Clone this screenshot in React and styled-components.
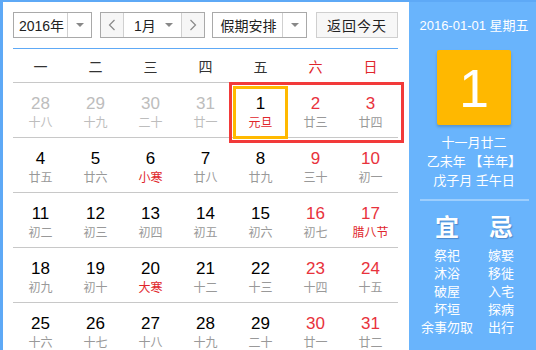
import React from 'react';
import styled, { createGlobalStyle } from 'styled-components';

const GlobalStyle = createGlobalStyle`
  html, body { margin: 0; padding: 0; background: #fff; }
  body { font-family: "Liberation Sans", "Noto Sans CJK SC", sans-serif; }
`;

const FONT = '"Liberation Sans", "Noto Sans CJK SC", sans-serif';
const RED = '#e8323c';

const Frame = styled.div`
  width: 536px;
  height: 350px;
  box-sizing: border-box;
  border-top: 2px solid #5ea9f6;
  border-left: 3px solid #5ea9f6;
  display: flex;
  overflow: hidden;
  font-family: ${FONT};
`;

const Main = styled.div`
  width: 406px;
  box-sizing: border-box;
  padding: 10px 0 0 10px;
  flex-shrink: 0;
`;

const Toolbar = styled.div`
  display: flex;
  height: 26px;
  width: 385px;
`;

const Select = styled.div`
  display: flex;
  height: 26px;
  width: ${(p) => p.$w}px;
  margin-right: ${(p) => p.$mr || 0}px;
  box-sizing: border-box;
  border: 1px solid #a9a9a9;
  background: #fff;
  font-size: 14px;
  color: #222;
`;

const SelectLabel = styled.div`
  flex: 1;
  display: flex;
  align-items: center;
  justify-content: center;
  padding-left: ${(p) => p.$pl || 0}px;
`;

const ArrowBox = styled.div`
  width: 23px;
  display: flex;
  align-items: center;
  justify-content: center;
  border-left: 1px solid #d0d0d0;
  &::after {
    content: '';
    border-left: 4px solid transparent;
    border-right: 4px solid transparent;
    border-top: 4px solid #888;
  }
`;

const MonthGroup = styled.div`
  display: flex;
  height: 26px;
  width: 105px;
  margin-right: 7px;
  box-sizing: border-box;
  border: 1px solid #a9a9a9;
  font-size: 14px;
  color: #222;
`;

const NavButton = styled.div`
  width: 22px;
  display: flex;
  align-items: center;
  justify-content: center;
  background: #f6f6f6;
  border-left: ${(p) => (p.$right ? '1px solid #d0d0d0' : 'none')};
  border-right: ${(p) => (p.$right ? 'none' : '1px solid #d0d0d0')};
`;

const MonthSelect = styled.div`
  flex: 1;
  display: flex;
  align-items: center;
  padding-left: 10px;
  background: #fff;
  justify-content: space-between;
  padding-right: 8px;
  &::after {
    content: '';
    border-left: 4px solid transparent;
    border-right: 4px solid transparent;
    border-top: 4px solid #888;
  }
`;

const TodayButton = styled.div`
  width: 82px;
  height: 26px;
  box-sizing: border-box;
  border: 1px solid #cfcfcf;
  background: #f7f7f7;
  font-size: 14px;
  color: #222;
  display: flex;
  align-items: center;
  justify-content: center;
  letter-spacing: 1px;
`;

const Calendar = styled.div`
  position: relative;
  width: 385px;
  margin-top: 10px;
  border-top: 1px solid #5ea9f6;
`;

const WeekHeader = styled.div`
  display: grid;
  grid-template-columns: repeat(7, 55px);
  height: 33px;
  border-bottom: 1px solid #c8c8c8;
`;

const WeekDay = styled.div`
  display: flex;
  align-items: center;
  justify-content: center;
  font-size: 14px;
  color: ${(p) => (p.$weekend ? '#e0262b' : '#333')};
`;

const Row = styled.div`
  display: grid;
  grid-template-columns: repeat(7, 55px);
  height: 54px;
  border-bottom: 1px solid #c8c8c8;
`;

const Cell = styled.div`
  display: flex;
  flex-direction: column;
  align-items: center;
  padding-top: 11px;
`;

const DayNum = styled.div`
  font-size: 17px;
  line-height: 20px;
  color: ${(p) => (p.$other ? '#bdbdbd' : p.$weekend ? RED : '#000')};
`;

const Lunar = styled.div`
  font-size: 12px;
  line-height: 18px;
  color: ${(p) => (p.$other ? '#bdbdbd' : p.$festival ? '#e0262b' : '#999')};
`;

const HolidayBox = styled.div`
  position: absolute;
  left: 216px;
  top: 33px;
  width: 175px;
  height: 61px;
  box-sizing: border-box;
  border: 3px solid #f23a3a;
  pointer-events: none;
`;

const TodayBox = styled.div`
  position: absolute;
  left: 220px;
  top: 37px;
  width: 55px;
  height: 53px;
  box-sizing: border-box;
  border: 3px solid #ffb900;
  pointer-events: none;
`;

const Side = styled.div`
  flex: 1;
  background: #69b4fc;
  color: #fff;
  display: flex;
  flex-direction: column;
  align-items: center;
`;

const SideDate = styled.div`
  margin-top: 15px;
  font-size: 13px;
  line-height: 18px;
  margin-left: 3px;
`;

const BigDay = styled.div`
  margin-top: 15px;
  margin-left: 3px;
  width: 74px;
  height: 75px;
  background: #ffb800;
  border-radius: 2px;
  box-shadow: 0 2px 3px rgba(0, 0, 0, 0.18);
  display: flex;
  align-items: center;
  justify-content: center;
  font-size: 54px;
  font-family: ${FONT};
`;

const LunarInfo = styled.div`
  margin-top: 8px;
  font-size: 13px;
  line-height: 19px;
  text-align: center;
  margin-left: 3px;
`;

const Divider = styled.div`
  width: 109px;
  height: 2px;
  margin-top: 9px;
  margin-left: 3px;
  background: rgba(255, 255, 255, 0.35);
`;

const Almanac = styled.div`
  display: grid;
  grid-template-columns: 54px 54px;
  margin-top: 13px;
  margin-left: 3px;
  text-align: center;
`;

const AlmanacHead = styled.div`
  font-size: 24px;
  font-weight: bold;
  line-height: 28px;
  text-shadow: 1px 1px 1px rgba(40, 80, 140, 0.45);
  margin-bottom: 5px;
`;

const AlmanacItem = styled.div`
  font-size: 13px;
  line-height: 18px;
  white-space: nowrap;
`;

const Chevron = ({ dir }) => (
  <svg width="8" height="12" viewBox="0 0 8 12">
    <polyline
      points={dir === 'left' ? '6.5,1 1.5,6 6.5,11' : '1.5,1 6.5,6 1.5,11'}
      fill="none"
      stroke="#888"
      strokeWidth="1.2"
    />
  </svg>
);

const weekdays = ['一', '二', '三', '四', '五', '六', '日'];

const weeks = [
  [
    ['28', '十八', 1], ['29', '十九', 1], ['30', '二十', 1], ['31', '廿一', 1],
    ['1', '元旦', 0, 1], ['2', '廿三'], ['3', '廿四'],
  ],
  [
    ['4', '廿五'], ['5', '廿六'], ['6', '小寒', 0, 1], ['7', '廿八'],
    ['8', '廿九'], ['9', '三十'], ['10', '初一'],
  ],
  [
    ['11', '初二'], ['12', '初三'], ['13', '初四'], ['14', '初五'],
    ['15', '初六'], ['16', '初七'], ['17', '腊八节', 0, 1],
  ],
  [
    ['18', '初九'], ['19', '初十'], ['20', '大寒', 0, 1], ['21', '十二'],
    ['22', '十三'], ['23', '十四'], ['24', '十五'],
  ],
  [
    ['25', '十六'], ['26', '十七'], ['27', '十八'], ['28', '十九'],
    ['29', '二十'], ['30', '廿一'], ['31', '廿二'],
  ],
];

const yi = ['祭祀', '沐浴', '破屋', '坏垣', '余事勿取'];
const ji = ['嫁娶', '移徙', '入宅', '探病', '出行'];

export default function App() {
  return (
    <>
      <GlobalStyle />
      <Frame>
        <Main>
          <Toolbar>
            <Select $w={79} $mr={8}>
              <SelectLabel $pl={2}>2016年</SelectLabel>
              <ArrowBox />
            </Select>
            <MonthGroup>
              <NavButton><Chevron dir="left" /></NavButton>
              <MonthSelect>1月</MonthSelect>
              <NavButton $right><Chevron dir="right" /></NavButton>
            </MonthGroup>
            <Select $w={95} $mr={9}>
              <SelectLabel $pl={2}>假期安排</SelectLabel>
              <ArrowBox />
            </Select>
            <TodayButton>返回今天</TodayButton>
          </Toolbar>
          <Calendar>
            <WeekHeader>
              {weekdays.map((d, i) => (
                <WeekDay key={d} $weekend={i > 4}>{d}</WeekDay>
              ))}
            </WeekHeader>
            {weeks.map((week, wi) => (
              <Row key={wi}>
                {week.map(([num, lunar, other, festival], i) => (
                  <Cell key={i}>
                    <DayNum $other={other} $weekend={i > 4}>{num}</DayNum>
                    <Lunar $other={other} $festival={festival}>{lunar}</Lunar>
                  </Cell>
                ))}
              </Row>
            ))}
            <HolidayBox />
            <TodayBox />
          </Calendar>
        </Main>
        <Side>
          <SideDate>2016-01-01 星期五</SideDate>
          <BigDay>1</BigDay>
          <LunarInfo>
            <div>十一月廿二</div>
            <div>乙未年 【羊年】</div>
            <div>戊子月 壬午日</div>
          </LunarInfo>
          <Divider />
          <Almanac>
            <div>
              <AlmanacHead>宜</AlmanacHead>
              {yi.map((t) => <AlmanacItem key={t}>{t}</AlmanacItem>)}
            </div>
            <div>
              <AlmanacHead>忌</AlmanacHead>
              {ji.map((t) => <AlmanacItem key={t}>{t}</AlmanacItem>)}
            </div>
          </Almanac>
        </Side>
      </Frame>
    </>
  );
}
